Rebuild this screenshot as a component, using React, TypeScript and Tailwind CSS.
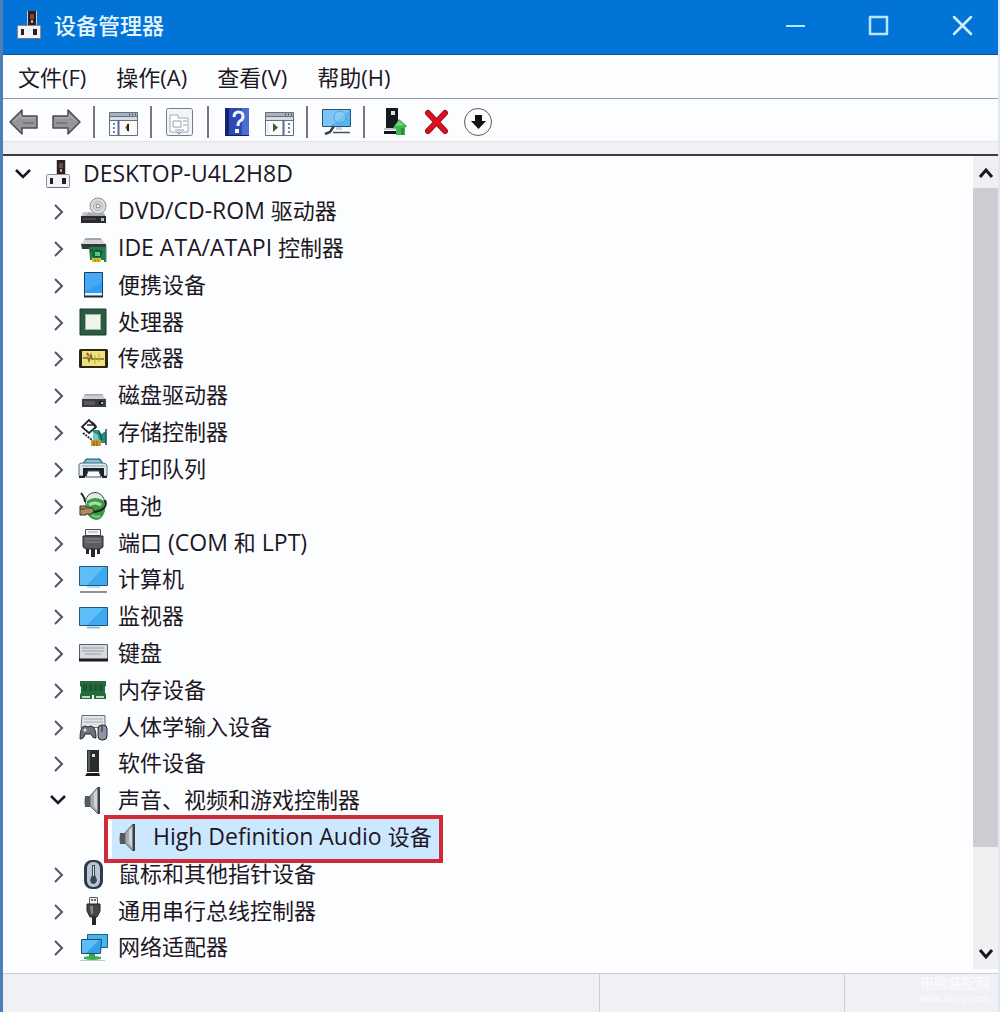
import React, { useState } from "react"

type IconProps = { className?: string }

const Svg: React.FC<{ children: React.ReactNode; className?: string; box?: string }> = ({
  children,
  className = "h-7 w-7",
  box = "0 0 28 28",
}) => (
  <svg viewBox={box} className={`shrink-0 overflow-visible ${className}`} fill="none" aria-hidden="true">
    {children}
  </svg>
)

// ---------- tree icons ----------

const ManagerIcon: React.FC<IconProps> = ({ className }) => (
  <Svg className={className}>
    <path d="M12 0h10v16H12z" fill="#cfc9ca" />
    <path d="M13 0h8v16h-8z" fill="#2b2026" />
    <path d="M15 3h4v5h-4z" fill="#6e4a45" />
    <path d="M16 9h2v3h-2z" fill="#c9a08c" />
    <path d="M3.500 14.500h21q1 0 1 1v11q0 1-1 1h-21q-1 0-1-1v-11q0-1 1-1z" fill="#f4f3f5" stroke="#8d8a92" />
    <path d="M6 18h3v6H6zM18 18h4v6h-4z" fill="#23202a" />
    <path d="M3 27.500h22" stroke="#77747c" />
  </Svg>
)

const DvdIcon = () => (
  <Svg>
    <path d="M4 15h20l3 5H2z" fill="#c9c9cc" />
    <circle cx="19" cy="9" r="8" fill="#dcdcde" stroke="#8f8f93" />
    <circle cx="19" cy="9" r="4.500" stroke="#b0b0b4" />
    <circle cx="19" cy="9" r="2" fill="#fff" stroke="#77777c" />
    <path d="M10 15q6 5 15 1l2 4H5z" fill="#a9a9ad" />
    <path d="M2 19h25v7H2z" fill="#2b2b2e" />
    <path d="M4 22h13" stroke="#66666a" />
    <path d="M22 21h3v3h-3z" fill="#8fd0c8" />
  </Svg>
)

const IdeIcon = () => (
  <Svg>
    <path d="M7 4h14l6 6H2z" fill="#d3d5d7" />
    <path d="M7 4h14l2 2H5z" fill="#a3a6a8" />
    <path d="M2 10h25v5H3z" fill="#34393a" />
    <path d="M10 13h17v15h-2V26H11z" fill="#1f7d4c" />
    <path d="M11 15h3v3h-3zM13 20l4-5 7 2-2 6-6 1z" fill="#155b38" />
    <path d="M16 18h5v4h-5z" fill="#5bc48a" />
    <path d="M13 24h9v4h-9z" fill="#e0bf2e" />
    <path d="M16 25v3M19 25v3" stroke="#8a7a1c" />
    <path d="M27 12v16" stroke="#6d7a74" />
  </Svg>
)

const PortableIcon = () => (
  <Svg>
    <path d="M5.500 1.500h18v24h-18z" fill="#2f9df2" stroke="#1c3f60" />
    <path d="M6 2h17v10L6 20z" fill="#55b3f7" opacity=".6" />
    <path d="M6 22h17v3H6z" fill="#e9f1f7" />
    <path d="M5 25.500h19" stroke="#1d2b3a" strokeWidth="2" />
  </Svg>
)

const CpuIcon = () => (
  <Svg>
    <path d="M1 1h26v26H1z" fill="#2a5c44" stroke="#173d2b" />
    <path d="M6 6h16v16H6z" fill="#9bb5a3" />
    <path d="M7 7h14v14H7z" fill="#f0f2ec" />
  </Svg>
)

const SensorIcon = () => (
  <Svg>
    <rect x="0" y="5" width="29" height="19" rx="1.500" fill="#2b2613" />
    <path d="M3 7h23v15H3z" fill="#eee27c" />
    <path d="M4 14h5l1 3 2-6 1 4h12" stroke="#7c6a1d" strokeWidth="1.500" />
    <path d="M8 9v4M16 11v9M20 9v9" stroke="#c2a93b" />
    <path d="M8 9l2 3" stroke="#b43b2b" strokeWidth="1.500" />
  </Svg>
)

const DiskIcon = () => (
  <Svg>
    <path d="M6 13h17l4 5H3z" fill="#cfcfd3" />
    <path d="M6 13h17l1 1.500H5z" fill="#a6a6ab" />
    <path d="M3 18h24v8H3z" fill="#3c3c42" />
    <path d="M5 21h11M5 23h11" stroke="#77777d" />
    <path d="M20 20h4v4h-4z" fill="#16161a" />
    <path d="M22 21h2v2h-2z" fill="#9cc3e6" />
  </Svg>
)

const StorageIcon = () => (
  <Svg>
    <path d="M3 9l7-7 7 7-7 6z" fill="#fff" stroke="#25252b" strokeWidth="1.800" />
    <path d="M8 7h8l-3-3M16 7v4" stroke="#25252b" strokeWidth="1.500" />
    <path d="M4 15l9 7" stroke="#2b3434" strokeWidth="2" strokeDasharray="2 1" />
    <path d="M14 12h6l2 4 5-3v12H14z" fill="#2a8d80" />
    <path d="M14 14l5 3 1 5-6 1z" fill="#74c4d8" />
    <path d="M27 11v16M20 13l3 9" stroke="#1f5450" strokeWidth="1.500" />
    <path d="M12 22h10v6H12z" fill="#c99a2a" />
    <path d="M15 23v5M18 23v5" stroke="#7d5b14" />
  </Svg>
)

const PrinterIcon = () => (
  <Svg>
    <path d="M7 4h14l4 6H3z" fill="#4ba5c9" stroke="#2d5870" />
    <path d="M8 5h12l2 4H6z" fill="#7cc5de" />
    <path d="M0 10q0-2 3-2h21q3 0 4 2v11H0z" fill="#dfe9f0" stroke="#5c6a74" />
    <path d="M3 11h23" stroke="#8aa0ae" />
    <path d="M4 13h21v8h-3l-2-4H9l-2 4H4z" fill="#1d2228" />
    <path d="M9 16h11l2 6H7z" fill="#fbfcfd" stroke="#4a5056" />
    <path d="M0 22h6M23 22h5" stroke="#20262c" strokeWidth="2" />
  </Svg>
)

const BatteryIcon = () => (
  <Svg>
    <circle cx="16" cy="10" r="9.500" fill="#dfeee0" stroke="#3c4a3e" />
    <path d="M8 9q8-6 17 0l1 10q-3 9-9 9-8-1-9-9z" fill="#3c9a45" />
    <path d="M10 13q6-4 12 0" stroke="#a9dfa6" strokeWidth="3" />
    <path d="M13 23q4 3 8 1" stroke="#86c98a" strokeWidth="2" />
    <path d="M2 1q4 5 4 9M26 8q4 10-12 12" stroke="#16241a" strokeWidth="2" />
    <path d="M1 14h6v2h6l2 3-3 3H7v1H1z" fill="#b08c5e" stroke="#3d2f20" />
    <path d="M1 17h5" stroke="#3d2f20" />
  </Svg>
)

const PortIcon = () => (
  <Svg>
    <path d="M6.500.5h15v6h-15z" fill="#f5f5f6" stroke="#4d4d52" />
    <path d="M9 3h10" stroke="#a0a0a5" />
    <path d="M4 7h20v11l-3 2H7l-3-2z" fill="#5c5c62" stroke="#28282d" />
    <path d="M6 10h16M6 13h16" stroke="#8a8a90" />
    <path d="M7 20h3v5H7zM12 20h4v8h-4zM18 20h3v5h-3z" fill="#27272c" />
  </Svg>
)

const ComputerIcon = () => (
  <Svg>
    <path d="M.5 1.500h28v19H.5z" fill="#3fa9f0" stroke="#27567a" />
    <path d="M1 2h24L8 20H1z" fill="#6cc4fa" opacity=".7" />
    <path d="M8 22h13" stroke="#9cd3ee" strokeWidth="1.500" />
    <path d="M1 27h27" stroke="#6c6c72" strokeWidth="1.500" />
  </Svg>
)

const MonitorIcon = () => (
  <Svg>
    <path d="M.5 5.500h28v18H.5z" fill="#3fa9f0" stroke="#27567a" />
    <path d="M1 6h24L8 23H1z" fill="#6cc4fa" opacity=".7" />
    <path d="M8 25.500h13" stroke="#8bc0da" strokeWidth="2" />
  </Svg>
)

const KeyboardIcon = () => (
  <Svg>
    <path d="M.5 5.500h28v16H.5z" fill="#d8d9e0" stroke="#5d5e66" />
    <path d="M3 9h22M3 12h22M6 15h16" stroke="#9b9ca6" />
    <path d="M0 21h29" stroke="#1b1b20" strokeWidth="3" />
  </Svg>
)

const MemoryIcon = () => (
  <Svg>
    <path d="M1 5h26v5l-1 1v6l1 1v5H1v-5l1-1v-6l-1-1z" fill="#246b40" />
    <path d="M4 8h4v7H4zM10 8h3v7h-3zM15 8h3v7h-3zM20 8h4v7h-4z" fill="#1c5632" />
    <path d="M3 21h8M17 21h8" stroke="#c5d9b6" strokeWidth="2" />
    <path d="M13 19h2v4h-2z" fill="#fdfdff" />
  </Svg>
)

const HidIcon = () => (
  <Svg>
    <path d="M3 2.500h23v12H2z" fill="#e2e4e8" stroke="#6a6d74" />
    <path d="M5 6h19M5 9h19" stroke="#a9acb4" />
    <path d="M1 26q0-13 5-13l3 1 3-1q5 1 5 12-3 1-5-4H6q-1 5-5 5z" fill="#6d747e" stroke="#23262b" />
    <circle cx="6" cy="17" r="1.500" fill="#dfe6ee" />
    <rect x="19" y="12" width="9" height="15" rx="4" fill="#8c96a3" stroke="#23262b" />
    <path d="M23 13v6" stroke="#20242a" />
  </Svg>
)

const TowerIcon = () => (
  <Svg>
    <path d="M8 1h12v22H8z" fill="#2a2d2c" />
    <path d="M9 2h2v20H9z" fill="#59605c" />
    <path d="M13 5h3v3h-3z" fill="#dfe6d8" />
    <path d="M8 24h12l1 3H6z" fill="#1a1c1c" />
  </Svg>
)

const SpeakerIcon = () => (
  <Svg>
    <path d="M6 10h5v11H6q-1-5 0-11z" fill="#55595f" />
    <path d="M11 10l8-9v27l-8-8z" fill="#a4abb3" stroke="#5c6269" />
    <path d="M15 7l3-3v20l-3-4z" fill="#d0d5da" />
    <path d="M20 1v27" stroke="#3b3f45" strokeWidth="2" />
  </Svg>
)

const MouseIcon = () => (
  <Svg>
    <rect x="5" y="0" width="19" height="29" rx="8" fill="#2e3a49" />
    <rect x="8" y="2" width="13" height="25" rx="6" fill="#b9c5d3" />
    <path d="M13 5h3v10l2 5q-1 4-3.500 4T11 20l2-5z" fill="#3a4757" />
    <path d="M14.500 6v10" stroke="#d7e2ee" />
  </Svg>
)

const UsbIcon = () => (
  <Svg>
    <path d="M10.500.5h8v7h-8z" fill="#f6f6f7" stroke="#5b5b60" />
    <path d="M12 3h2M15 3h2" stroke="#3b3b40" strokeWidth="1.500" />
    <path d="M8 7h13v7l-3 6h-7l-3-6z" fill="#4a4648" stroke="#222024" />
    <path d="M11 9h3v8h-2z" fill="#8c888a" />
    <path d="M13 20h4v8h-4z" fill="#2a282c" />
  </Svg>
)

const NetworkIcon = () => (
  <Svg>
    <path d="M8.500 1.500h20v13h-20z" fill="#49b3ef" stroke="#1e5f88" />
    <path d="M2.500 6.500h20l-1 14h-19z" fill="#35a0ea" stroke="#1b4d74" />
    <path d="M3 7h17L7 20H3z" fill="#74c8f8" opacity=".7" />
    <path d="M10 21h6v3h-6z" fill="#37a04c" />
    <path d="M5 24q8-2 17 0v2q-8 2-17 0z" fill="#3fae52" />
    <path d="M1 27.500h25" stroke="#bccabf" />
  </Svg>
)

// ---------- toolbar icons ----------

const ArrowIcon: React.FC<{ flip?: boolean }> = ({ flip }) => (
  <Svg box="0 0 30 30" className={flip ? "h-[30px] w-[30px] -scale-x-100" : "h-[30px] w-[30px]"}>
    <path d="M1 15L13 3v6h15v12H13v6z" fill="#96969a" stroke="#4b4b50" strokeWidth="1.500" strokeLinejoin="round" />
    <path d="M5 14l7-6v3h14" stroke="#b5b5b9" />
    <path d="M14 16h11" stroke="#77777c" strokeWidth="2" />
  </Svg>
)

const ConsoleIcon: React.FC<{ flip?: boolean }> = ({ flip }) => (
  <Svg box="0 0 30 30" className="h-[30px] w-[30px]">
    <path d="M1.500 5.500h28v23h-28z" fill="#fbfbfd" stroke="#66707c" />
    <path d="M2 6h27v3H2z" fill="#a9b2bd" />
    <path d="M2 10h27v3H2z" fill="#d5dbe2" />
    <path d="M21 7.500h1M24 7.500h1M27 7.500h1" stroke="#333b46" strokeWidth="1.500" />
    <path d="M2 9.500h27M2 13.500h27" stroke="#66707c" />
    {flip ? (
      <>
        <path d="M19.500 13v15" stroke="#4f6c93" strokeWidth="2" />
        <path d="M25 16v10" stroke="#6e88b0" strokeWidth="2" strokeDasharray="2 2" />
        <path d="M9 16l5 4.500-5 4.500z" fill="#4c5a27" />
        <path d="M4 16v10" stroke="#d6dde6" />
      </>
    ) : (
      <>
        <path d="M10.500 13v15" stroke="#4f6c93" strokeWidth="2" />
        <path d="M6 16v10" stroke="#6e88b0" strokeWidth="2" strokeDasharray="2 2" />
        <path d="M21 16v9l-4-4.500z" fill="#8a7a1c" />
        <path d="M20 17v7" stroke="#2a240c" strokeWidth="2" />
      </>
    )}
  </Svg>
)

const PropertiesIcon = () => (
  <Svg box="0 0 30 30" className="h-[30px] w-[30px]">
    <rect x="1.500" y="1.500" width="26" height="27" rx="2" fill="#f3f4f7" stroke="#797b82" />
    <path d="M5 8h8v3h10v14H5z" fill="#fff" stroke="#a3a9b2" />
    <path d="M8 14h8v6H8zM18 14h4M18 18h4M10 23h9" stroke="#8ba0b7" />
    <path d="M12 25l2 2 2-2" stroke="#4c90c6" />
  </Svg>
)

const HelpIcon = () => (
  <Svg box="0 0 30 30" className="h-[30px] w-[30px]">
    <path d="M3 1h24v28H3z" fill="#2c49b5" />
    <path d="M3 1h4v28H3z" fill="#16246f" />
    <path d="M20 1h7v28h-7z" fill="#4a6cd4" />
    <path d="M12 10q0-5 4.500-5t4.500 4.500q0 3-3 4.500-2 1-2 5" stroke="#f3f5fd" strokeWidth="3" />
    <path d="M13 22h4v4h-4z" fill="#f3f5fd" />
    <path d="M3 28.500h24" stroke="#141f5c" />
  </Svg>
)

const ScanIcon = () => (
  <Svg box="0 0 30 30" className="h-[30px] w-[30px]">
    <path d="M1.500 2.500h28v17h-28z" fill="#58b4ee" stroke="#2a4f70" />
    <path d="M2 3h27L10 19H2z" fill="#86cdf8" opacity=".7" />
    <circle cx="19" cy="10" r="6" fill="#9bd6f7" fillOpacity=".4" stroke="#5ba3d4" />
    <path d="M13 19l-4 6-5 2" stroke="#39424d" strokeWidth="2.500" />
    <path d="M12 25.500h17" stroke="#4c5058" strokeWidth="1.500" />
    <path d="M15 20h6v3h-6z" fill="#c9d2da" />
  </Svg>
)

const UpdateIcon = () => (
  <Svg box="0 0 30 30" className="h-[30px] w-[30px]">
    <path d="M8 1h12v20H8z" fill="#171a1c" />
    <path d="M13 4h4v4h-4z" fill="#d9e4dc" />
    <path d="M6 24h16v3H6z" fill="#15171a" />
    <path d="M6 22h11" stroke="#8d9297" />
    <path d="M21 12l8 7-2 2v7h-9v-6l-3-1z" fill="#43b453" />
    <path d="M21 14l5 4-9 1z" fill="#74d67f" />
    <path d="M23 21h3v7h-3z" fill="#2d8d3d" />
  </Svg>
)

const RemoveIcon = () => (
  <Svg box="0 0 30 30" className="h-[30px] w-[30px]">
    <path d="M8 6l17 18M25 6L8 24" stroke="#a50f1c" strokeWidth="6" strokeLinecap="round" />
    <path d="M8 6l17 18M25 6L8 24" stroke="#d8121f" strokeWidth="4" strokeLinecap="round" />
  </Svg>
)

const DownIcon = () => (
  <Svg box="0 0 30 30" className="h-[30px] w-[30px]">
    <circle cx="16" cy="15" r="13.500" fill="#fdfdfe" stroke="#5b5b60" />
    <path d="M13 8h7v6h4l-7.500 8L9 14h4z" fill="#111114" />
  </Svg>
)

const toolGroups = [
  [
    { label: "后退", icon: <ArrowIcon /> },
    { label: "前进", icon: <ArrowIcon flip /> },
  ],
  [{ label: "显示/隐藏控制台树", icon: <ConsoleIcon /> }],
  [{ label: "属性", icon: <PropertiesIcon /> }],
  [
    { label: "帮助", icon: <HelpIcon /> },
    { label: "显示/隐藏操作窗格", icon: <ConsoleIcon flip /> },
  ],
  [{ label: "扫描检测硬件改动", icon: <ScanIcon /> }],
  [
    { label: "更新驱动程序", icon: <UpdateIcon /> },
    { label: "卸载设备", icon: <RemoveIcon /> },
    { label: "禁用设备", icon: <DownIcon /> },
  ],
]

const menus = ["文件(F)", "操作(A)", "查看(V)", "帮助(H)"]

const AUDIO = "声音、视频和游戏控制器"

const categories = [
  { name: "DVD/CD-ROM 驱动器", icon: <DvdIcon /> },
  { name: "IDE ATA/ATAPI 控制器", icon: <IdeIcon /> },
  { name: "便携设备", icon: <PortableIcon /> },
  { name: "处理器", icon: <CpuIcon /> },
  { name: "传感器", icon: <SensorIcon /> },
  { name: "磁盘驱动器", icon: <DiskIcon /> },
  { name: "存储控制器", icon: <StorageIcon /> },
  { name: "打印队列", icon: <PrinterIcon /> },
  { name: "电池", icon: <BatteryIcon /> },
  { name: "端口 (COM 和 LPT)", icon: <PortIcon /> },
  { name: "计算机", icon: <ComputerIcon /> },
  { name: "监视器", icon: <MonitorIcon /> },
  { name: "键盘", icon: <KeyboardIcon /> },
  { name: "内存设备", icon: <MemoryIcon /> },
  { name: "人体学输入设备", icon: <HidIcon /> },
  { name: "软件设备", icon: <TowerIcon /> },
  { name: AUDIO, icon: <SpeakerIcon /> },
  { name: "鼠标和其他指针设备", icon: <MouseIcon /> },
  { name: "通用串行总线控制器", icon: <UsbIcon /> },
  { name: "网络适配器", icon: <NetworkIcon /> },
]

// latin runs are set one size larger than the chinese text
const Label: React.FC<{ text: string }> = ({ text }) => (
  <span className="ml-[11px] pb-[2px] whitespace-pre">
    {text.split(/([ -~]+)/).map((part, i) =>
      i % 2 ? (
        <span key={i} className="text-[23px]">
          {part}
        </span>
      ) : (
        part
      )
    )}
  </span>
)

const Chevron: React.FC<{ open: boolean; name: string; onClick: () => void }> = ({ open, name, onClick }) => (
  <button
    aria-label={name}
    aria-expanded={open}
    onClick={onClick}
    className="mr-[9px] flex h-6 w-6 shrink-0 items-center justify-center"
  >
    <Svg box="0 0 24 24" className="h-6 w-6">
      {open ? (
        <path d="M5 8l7 7 7-7" stroke="#17171c" strokeWidth="2.500" />
      ) : (
        <path d="M9 6l7 7-7 7" stroke="#55555c" strokeWidth="2" />
      )}
    </Svg>
  </button>
)

const TitleBar = () => (
  <header className="flex h-[55px] items-center border-b border-[#1b4f8c] bg-[#0273d7] pb-1 pl-3 text-[#e6f6ff]">
    <ManagerIcon className="h-7 w-7" />
    <h1 className="ml-[11px] flex-1 text-[22px] font-medium">设备管理器</h1>
    <div className="mr-px flex gap-[11px]">
      <button aria-label="最小化" className="flex h-12 w-[72px] items-center justify-center">
        <Svg box="0 0 24 24" className="h-6 w-6">
          <path d="M3 13h19" stroke="#b9e6ff" strokeWidth="2" />
        </Svg>
      </button>
      <button aria-label="最大化" className="flex h-12 w-[72px] items-center justify-center">
        <Svg box="0 0 24 24" className="h-6 w-6">
          <path d="M4 4h17v17H4z" stroke="#b9e6ff" strokeWidth="2.500" strokeLinejoin="round" />
        </Svg>
      </button>
      <button aria-label="关闭" className="flex h-12 w-[72px] items-center justify-center">
        <Svg box="0 0 24 24" className="h-6 w-6">
          <path d="M5 4l17 17M22 4L5 21" stroke="#d3f0ff" strokeWidth="2.500" strokeLinecap="round" />
        </Svg>
      </button>
    </div>
  </header>
)

const Scrollbar = () => (
  <div className="flex w-[25px] shrink-0 flex-col bg-[#f0f0f3]">
    <button aria-label="向上滚动" className="flex h-8 items-center justify-center">
      <Svg box="0 0 24 24" className="h-6 w-6">
        <path d="M6 17l6-7 6 7" stroke="#17171c" strokeWidth="3" />
      </Svg>
    </button>
    <div className="flex-1">
      <div className="h-[88%] bg-[#cdcdd1]" />
    </div>
    <button aria-label="向下滚动" className="flex h-8 items-center justify-center">
      <Svg box="0 0 24 24" className="h-6 w-6">
        <path d="M6 9l6 7 6-7" stroke="#17171c" strokeWidth="3" />
      </Svg>
    </button>
  </div>
)

export default function App() {
  const [rootOpen, setRootOpen] = useState(true)
  const [opened, setOpened] = useState<string[]>([AUDIO])

  const toggle = (name: string) =>
    setOpened((prev) => (prev.includes(name) ? prev.filter((n) => n !== name) : [...prev, name]))

  return (
    <div className="flex min-h-screen flex-col overflow-hidden border-r-2 border-l-[3px] border-r-[#dbe8f5] border-l-[#4c7fb5] bg-[#fcfdff] font-['Open_Sans','Noto_Sans_CJK_SC',sans-serif] text-[22px] leading-8 text-[#1d1724]">
      <TitleBar />

      <nav className="flex h-11 items-center gap-[30px] border-b border-[#9a9ca3] pl-[15px]">
        {menus.map((m) => (
          <button key={m} className="whitespace-nowrap">
            {m}
          </button>
        ))}
      </nav>

      <div className="flex h-[43px] items-center gap-3 border-b border-[#dfe4e6] pt-[3px] pl-[6px]">
        {toolGroups.map((group, i) => (
          <React.Fragment key={i}>
            {i > 0 && <div className="h-8 w-[3px] border-l-2 border-[#77777d]" />}
            {group.map((t) => (
              <button key={t.label} aria-label={t.label} title={t.label}>
                {t.icon}
              </button>
            ))}
          </React.Fragment>
        ))}
      </div>
      <div className="h-3 bg-[#f1f1f3]" />

      <main className="flex flex-1 border-t-2 border-[#3b3b40]">
        <ul className="flex flex-1 flex-col pb-[3px]">
          <li className="flex min-h-8 flex-1 items-center pl-2">
            <Chevron open={rootOpen} name="DESKTOP-U4L2H8D" onClick={() => setRootOpen(!rootOpen)} />
            <ManagerIcon />
            <Label text="DESKTOP-U4L2H8D" />
          </li>
          {rootOpen &&
            categories.map((c) => (
              <React.Fragment key={c.name}>
                <li className="flex min-h-8 flex-1 items-center pl-[43px]">
                  <Chevron open={opened.includes(c.name)} name={c.name} onClick={() => toggle(c.name)} />
                  {c.icon}
                  <Label text={c.name} />
                </li>
                {c.name === AUDIO && opened.includes(AUDIO) && (
                  <li className="relative flex min-h-8 flex-1 items-center pl-[111px]">
                    <div className="absolute -top-1 -bottom-2 left-[101px] w-[339px] border-4 border-[#cf2a35] bg-[#fcfdff] pl-1">
                      <div className="h-full bg-[#cce8ff]" />
                    </div>
                    <div className="relative flex items-center">
                      <SpeakerIcon />
                      <Label text="High Definition Audio 设备" />
                    </div>
                  </li>
                )}
              </React.Fragment>
            ))}
        </ul>
        <Scrollbar />
      </main>

      <footer className="mt-1 flex h-[39px] border-t border-[#cdced2] bg-[#f0f1f5]">
        <div className="flex-1 border-r border-[#cdced2]" />
        <div className="w-[245px] border-r border-[#cdced2]" />
        <div className="w-[153px] pr-2 text-right text-[#fcfcfe]">
          <p className="text-[14px] leading-[18px]">电脑装配网</p>
          <p className="text-[10px] leading-3">www.dnzp.com</p>
        </div>
      </footer>
    </div>
  )
}
